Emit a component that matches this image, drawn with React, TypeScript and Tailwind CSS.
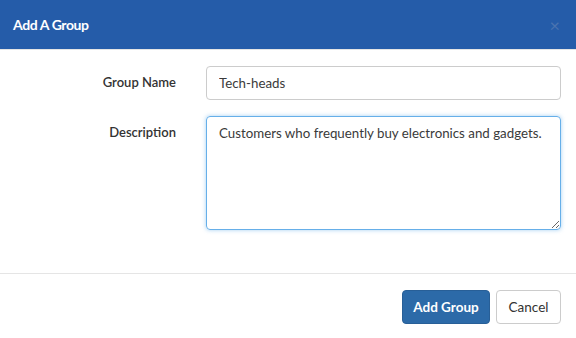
import React, { useEffect, useRef } from "react";

export default function App() {
  const ref = useRef<HTMLTextAreaElement>(null);
  useEffect(() => {
    const el = ref.current;
    if (el) {
      el.focus();
      const n = el.value.length;
      el.setSelectionRange(n, n);
    }
  }, []);
  return (
    <div className="w-[576px] h-[338px] bg-white text-[#333] overflow-hidden" style={{ fontFamily: "Lato, 'Open Sans', sans-serif" }}>
      <div className="h-[50px] bg-[#255ca9] flex items-center justify-between pl-[13px] pr-[16px] border-b border-[#e5e5e5]">
        <h1 className="text-white text-[14px] font-bold tracking-[-0.4px]">Add A Group</h1>
        <span className="text-[#4a73b0] text-[18px] leading-none">×</span>
      </div>
      <div className="h-[224px] pt-[16px] pl-[15px] pr-[15px] border-b border-[#e5e5e5]">
        <div className="flex items-center mb-[16px]">
          <label className="w-[161px] text-right text-[13px] font-semibold text-[#333]">Group Name</label>
          <div className="ml-[30px] flex-1">
            <input
              defaultValue="Tech-heads"
              className="w-full h-[34px] px-[12px] border border-[#ccc] rounded-[4px] text-[13.3px] text-[#3a3a3a] outline-none"
            />
          </div>
        </div>
        <div className="flex items-start">
          <label className="w-[161px] text-right text-[13px] font-semibold text-[#333] pt-[7px]">Description</label>
          <div className="ml-[30px] flex-1">
            <textarea
              ref={ref}
              defaultValue="Customers who frequently buy electronics and gadgets."
              className="block w-full h-[114px] px-[12px] py-[6px] border border-[#66afe9] rounded-[4px] text-[13.3px] leading-[20px] text-[#3a3a3a] outline-none shadow-[0_0_4px_rgba(102,175,233,0.6)]"
            />
          </div>
        </div>
      </div>
      <div className="flex justify-end gap-[6px] pt-[16px] pr-[15px]">
        <button className="h-[34px] w-[88px] rounded-[4px] bg-[#2c6aa8] border border-[#285f97] text-white text-[13.5px] font-bold">Add Group</button>
        <button className="h-[34px] w-[65px] rounded-[4px] bg-white border border-[#ccc] text-[#333] text-[13.5px]">Cancel</button>
      </div>
    </div>
  );
}
